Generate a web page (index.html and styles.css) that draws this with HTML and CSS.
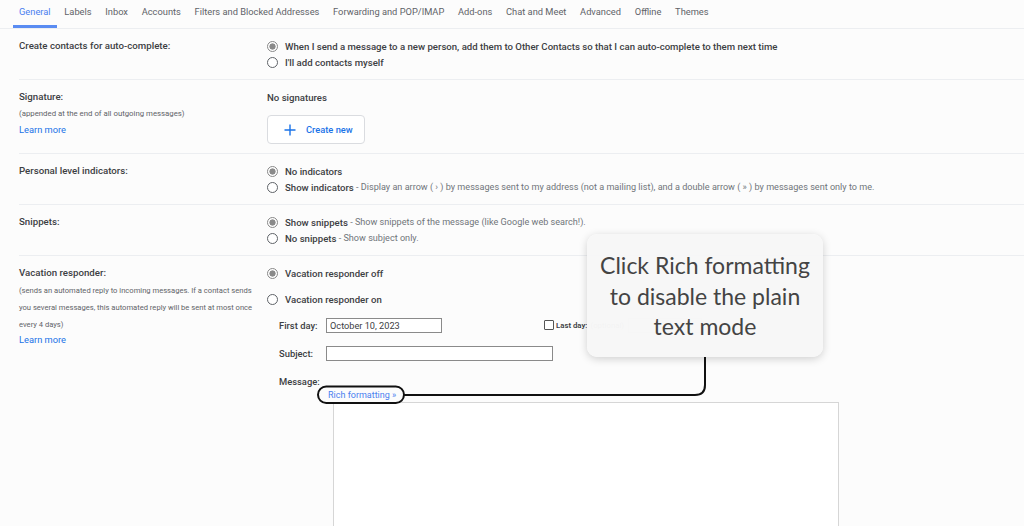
FILE: index.html
```html
<!DOCTYPE html>
<html>
<head>
    <title>Settings - General</title>
    <link rel="stylesheet" href="styles.css">
</head>
<body>
    <!-- Settings tabs -->
    <nav class="tabs">
        <a class="tab active">General</a>
        <a class="tab">Labels</a>
        <a class="tab">Inbox</a>
        <a class="tab">Accounts</a>
        <a class="tab">Filters and Blocked Addresses</a>
        <a class="tab">Forwarding and POP/IMAP</a>
        <a class="tab">Add-ons</a>
        <a class="tab">Chat and Meet</a>
        <a class="tab">Advanced</a>
        <a class="tab">Offline</a>
        <a class="tab">Themes</a>
    </nav>

    <div class="settings">
        <div class="row">
            <div class="label">Create contacts for auto-complete:</div>
            <div class="value">
                <div class="option"><span class="radio checked"></span><b>When I send a message to a new person, add them to Other Contacts so that I can auto-complete to them next time</b></div>
                <div class="option"><span class="radio"></span><b>I'll add contacts myself</b></div>
            </div>
        </div>

        <div class="row">
            <div class="label">
                Signature:
                <div class="sub">(appended at the end of all outgoing messages)</div>
                <a class="learn">Learn more</a>
            </div>
            <div class="value">
                <div class="option"><b>No signatures</b></div>
                <button class="create-btn">
                    <svg width="12" height="12" viewBox="0 0 12 12"><path d="M6 0.5V11.5M0.5 6H11.5" stroke="#1a73e8" stroke-width="1.4" fill="none"/></svg>
                    Create new
                </button>
            </div>
        </div>

        <div class="row">
            <div class="label">Personal level indicators:</div>
            <div class="value">
                <div class="option"><span class="radio checked"></span><b>No indicators</b></div>
                <div class="option"><span class="radio"></span><b>Show indicators</b><span class="desc">&nbsp;- Display an arrow ( › ) by messages sent to my address (not a mailing list), and a double arrow ( » ) by messages sent only to me.</span></div>
            </div>
        </div>

        <div class="row">
            <div class="label">Snippets:</div>
            <div class="value">
                <div class="option"><span class="radio checked"></span><b>Show snippets</b><span class="desc">&nbsp;- Show snippets of the message (like Google web search!).</span></div>
                <div class="option"><span class="radio"></span><b>No snippets</b><span class="desc">&nbsp;- Show subject only.</span></div>
            </div>
        </div>

        <div class="row last">
            <div class="label">
                Vacation responder:
                <div class="sub long">(sends an automated reply to incoming messages. If a contact sends<br>you several messages, this automated reply will be sent at most once<br>every 4 days)</div>
                <a class="learn">Learn more</a>
            </div>
            <div class="value">
                <div class="option"><span class="radio checked"></span><b>Vacation responder off</b></div>
                <div class="option spaced"><span class="radio"></span><b>Vacation responder on</b></div>
                <div class="field first-day">
                    <span class="field-label">First day:</span>
                    <input class="text-input short" value="October 10, 2023">
                    <span class="last-day"><span class="checkbox"></span><b>Last day:</b> <span class="optional">(optional)</span></span>
                    <input class="text-input faint">
                </div>
                <div class="field">
                    <span class="field-label">Subject:</span>
                    <input class="text-input long">
                </div>
                <div class="field">
                    <span class="field-label">Message:</span>
                </div>
                <a class="rich-link">Rich formatting »</a>
                <div class="message-box"></div>
            </div>
        </div>
    </div>

    <!-- Tutorial callout -->
    <div class="callout">Click Rich formatting<br>to disable the plain<br>text mode</div>
    <svg class="connector" width="1024" height="526" viewBox="0 0 1024 526">
        <path d="M705 357 V385 Q705 395 695 395 H404" stroke="#111" stroke-width="2" fill="none"/>
        <rect x="318" y="386.5" width="86" height="16.5" rx="8.2" stroke="#111" stroke-width="2" fill="none"/>
    </svg>
</body>
</html>
```

FILE: styles.css
```css
* {
    margin: 0;
    padding: 0;
    box-sizing: border-box;
}
body {
    font-family: 'Roboto', 'Liberation Sans', sans-serif;
    background-color: #fcfcfc;
    color: #3c4043;
    width: 1024px;
    height: 526px;
    overflow: hidden;
    position: relative;
}
/* Tabs along the top */
.tabs {
    display: flex;
    height: 29px;
    padding-left: 13px;
    border-bottom: 1px solid #eceef1;
}
.tab {
    padding: 0 6px;
    margin-right: 1.7px;
    font-size: 9.3px;
    line-height: 23px;
    color: #5f6368;
    border-bottom: 3px solid transparent;
    white-space: nowrap;
}
.tab.active {
    color: #4a7ef0;
    border-bottom-color: #5a8cf2;
}
/* Settings rows */
.row {
    display: flex;
    margin-left: 19px;
    padding: 9px 0 9px;
    border-bottom: 1px solid #eceef1;
}
.row.last {
    border-bottom: none;
}
.label {
    width: 248px;
    flex-shrink: 0;
    font-size: 9.7px;
    font-weight: 500;
    line-height: 16px;
    color: #3c4043;
}
.sub {
    font-size: 7.8px;
    font-weight: 400;
    color: #5f6368;
    line-height: 17px;
}
.sub.long {
    font-size: 7.6px;
    margin-top: 1px;
}
.learn {
    display: block;
    font-size: 9.3px;
    font-weight: 400;
    color: #1a73e8;
    line-height: 16px;
}
.sub.long + .learn {
    margin-top: -1px;
}
.value {
    flex: 1;
}
.option {
    display: flex;
    align-items: center;
    height: 16px;
    font-size: 9.6px;
    white-space: nowrap;
}
.option b {
    font-weight: 500;
    color: #3c4043;
}
.option.spaced {
    margin-top: 10px;
}
.desc {
    font-size: 9.1px;
    color: #70757a;
}
.radio {
    width: 11px;
    height: 11px;
    border: 1px solid #5f6368;
    border-radius: 50%;
    margin-right: 7px;
    flex-shrink: 0;
    background: #fff;
}
.radio.checked {
    border-color: #888;
    background: radial-gradient(circle, #8a8a8a 0 2.8px, #fff 3.4px);
}
/* Create new signature button */
.create-btn {
    display: flex;
    align-items: center;
    gap: 10px;
    width: 98px;
    height: 29px;
    margin-top: 10px;
    padding-left: 16px;
    background: #fff;
    border: 1px solid #dadce0;
    border-radius: 4px;
    font-family: 'Roboto', 'Liberation Sans', sans-serif;
    font-size: 9.3px;
    font-weight: 500;
    color: #1a73e8;
}
/* Vacation responder form */
.field {
    display: flex;
    align-items: center;
    height: 16px;
    margin-top: 12px;
    padding-left: 12px;
    white-space: nowrap;
}
.field.first-day {
    margin-top: 10px;
}
.field-label {
    width: 47px;
    font-size: 9.4px;
    font-weight: 500;
    color: #3c4043;
}
.text-input {
    height: 15px;
    border: 1px solid #8a8a8a;
    background: #fff;
    font-family: 'Roboto', 'Liberation Sans', sans-serif;
    font-size: 9.2px;
    color: #3c4043;
    padding: 0 3px;
}
.text-input.short {
    width: 116px;
}
.text-input.long {
    width: 227px;
}
.text-input.faint {
    width: 74px;
    margin-left: 4px;
    border-color: #e4e4e4;
}
.last-day {
    display: flex;
    align-items: center;
    margin-left: 102px;
    font-size: 7.8px;
}
.last-day b {
    font-weight: 600;
    color: #3c4043;
    margin-left: 2px;
}
.optional {
    margin-left: 3px;
    color: #aaa;
}
.checkbox {
    width: 10px;
    height: 10px;
    border: 1px solid #555;
    border-radius: 1px;
    background: #fff;
}
.rich-link {
    display: block;
    height: 12px;
    margin-left: 61px;
    font-size: 9px;
    line-height: 12px;
    color: #4a80f0;
}
.message-box {
    width: 506px;
    height: 140px;
    margin: 1px 0 0 66px;
    background: #fff;
    border: 1px solid #d6d6d6;
}
/* Callout bubble and connector line */
.callout {
    position: absolute;
    left: 587px;
    top: 234px;
    width: 236px;
    height: 123px;
    padding-top: 16px;
    background: rgba(246, 246, 246, 0.94);
    border-radius: 10px;
    box-shadow: 0px 2px 8px rgba(0, 0, 0, 0.18);
    font-family: 'Lato', 'Open Sans', sans-serif;
    font-size: 23px;
    line-height: 30.5px;
    color: #444;
    text-align: center;
}
.connector {
    position: absolute;
    left: 0;
    top: 0;
    pointer-events: none;
}
```
